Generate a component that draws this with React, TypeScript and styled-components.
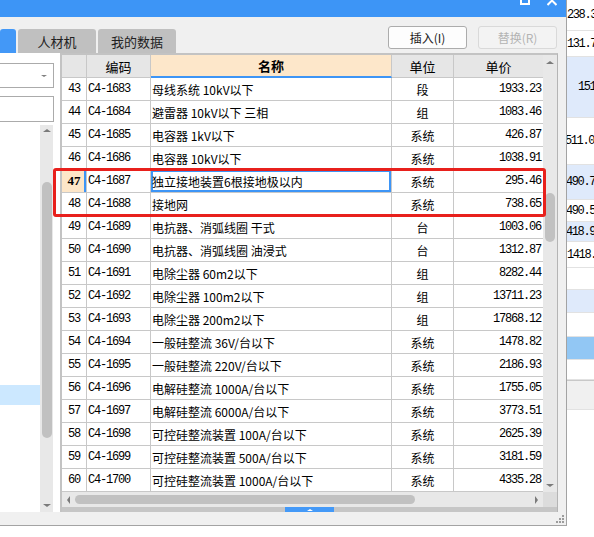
import React from "react";
import styled, { createGlobalStyle, css } from "styled-components";

const GlobalStyle = createGlobalStyle`
  html, body {
    margin: 0;
    padding: 0;
    background: #ffffff;
  }
  body {
    width: 594px;
    height: 537px;
    overflow: hidden;
    font-family: "Noto Sans CJK SC", "Noto Sans", sans-serif;
  }
`;

const mono = css`
  font-family: "Liberation Mono", "DejaVu Sans Mono", monospace;
  font-size: 12px;
  letter-spacing: -1.2px;
`;

const Page = styled.div`
  display: flex;
  align-items: flex-start;
  width: 594px;
  height: 537px;
  overflow: hidden;
  background: #fff;
`;

const Dialog = styled.div`
  position: relative;
  flex: none;
  display: flex;
  flex-direction: column;
  width: 567px;
  height: 526px;
  box-sizing: border-box;
  border-right: 1px solid #a3a3a3;
  border-bottom: 1px solid #a3a3a3;
  background: #f0f0f0;
`;

const TitleBar = styled.div`
  display: flex;
  justify-content: flex-end;
  align-items: flex-start;
  gap: 17px;
  height: 17px;
  padding-right: 9px;
  background: #3d95f6;
`;

const Toolbar = styled.div`
  display: flex;
  justify-content: space-between;
  height: 36px;
`;

const TabRow = styled.div`
  display: flex;
  align-self: flex-end;
  gap: 2px;
`;

const Tab = styled.div<{ $active?: boolean; $w: number }>`
  display: flex;
  align-items: center;
  justify-content: center;
  width: ${(p) => p.$w}px;
  height: 24px;
  border-radius: 3px 3px 0 0;
  background: ${(p) => (p.$active ? "#4398f7" : "#c0c0c0")};
  color: #222;
  font-size: 13px;
`;

const ButtonRow = styled.div`
  display: flex;
  align-self: flex-start;
  gap: 11px;
  padding: 9px 9px 0 0;
`;

const Button = styled.div<{ $disabled?: boolean }>`
  display: flex;
  align-items: center;
  justify-content: center;
  width: 79px;
  height: 23px;
  box-sizing: border-box;
  border: 1px solid ${(p) => (p.$disabled ? "#d9d9d9" : "#acacac")};
  border-radius: 3px;
  background: ${(p) => (p.$disabled ? "#f3f3f3" : "#fdfdfd")};
  color: ${(p) => (p.$disabled ? "#b3b3b3" : "#1a1a1a")};
  font-size: 12px;
`;

const Main = styled.div`
  display: flex;
  height: 459px;
`;

const LeftPanel = styled.div`
  display: flex;
  flex-direction: column;
  width: 60px;
  padding-top: 10px;
  box-sizing: border-box;
  background: #fff;
`;

const SelectBox = styled.div`
  display: flex;
  align-items: center;
  justify-content: flex-end;
  width: 54px;
  height: 25px;
  box-sizing: border-box;
  border: 1px solid #ababab;
  border-left: none;
  padding-right: 6px;
`;

const InputBox = styled.div`
  width: 54px;
  height: 26px;
  margin-top: 8px;
  box-sizing: border-box;
  border: 1px solid #ababab;
  border-left: none;
`;

const Triangle = styled.div<{ $dir: "up" | "down" | "left" | "right"; $size?: number; $color?: string }>`
  width: 0;
  height: 0;
  ${(p) => {
    const s = p.$size ?? 4;
    const c = p.$color ?? "#7a7a7a";
    if (p.$dir === "up")
      return `border-left:${s}px solid transparent;border-right:${s}px solid transparent;border-bottom:${s - 1}px solid ${c};`;
    if (p.$dir === "down")
      return `border-left:${s}px solid transparent;border-right:${s}px solid transparent;border-top:${s - 1}px solid ${c};`;
    if (p.$dir === "left")
      return `border-top:${s}px solid transparent;border-bottom:${s}px solid transparent;border-right:${s - 1}px solid ${c};`;
    return `border-top:${s}px solid transparent;border-bottom:${s}px solid transparent;border-left:${s - 1}px solid ${c};`;
  }}
`;

const ListArea = styled.div`
  display: flex;
  flex: 1;
  width: 53px;
  margin-top: 3px;
`;

const ListBody = styled.div`
  flex: 1;
  display: flex;
  flex-direction: column;
`;

const ListRow = styled.div<{ $selected?: boolean }>`
  height: 20px;
  flex: none;
  background: ${(p) => (p.$selected ? "#cce8ff" : "transparent")};
`;

const VScroll = styled.div<{ $w: number }>`
  display: flex;
  flex-direction: column;
  align-items: center;
  width: ${(p) => p.$w}px;
  flex: none;
  background: #e8e8e8;
`;

const ArrowBox = styled.div<{ $h: number }>`
  display: flex;
  align-items: center;
  justify-content: center;
  height: ${(p) => p.$h}px;
  flex: none;
`;

const VThumb = styled.div<{ $top: number; $h: number }>`
  width: 10px;
  height: ${(p) => p.$h}px;
  margin-top: ${(p) => p.$top}px;
  border-radius: 5px;
  background: #c1c1c1;
`;

const Spacer = styled.div`
  flex: 1;
`;

const GridPane = styled.div`
  display: flex;
  flex-direction: column;
  width: 498px;
  box-sizing: border-box;
  border-left: 2px solid #c3c3c3;
  border-top: 2px solid #c3c3c3;
  border-right: 1px solid #b4b4b4;
`;

const GridTop = styled.div`
  display: flex;
  height: 437px;
`;

const Table = styled.div`
  display: flex;
  flex-direction: column;
  width: 481px;
  background: #fff;
`;

const Row = styled.div`
  display: grid;
  grid-template-columns: 25px 64px 241px 62px 89px;
  height: 23px;
  flex: none;
`;

type Align = "left" | "center" | "right";

const Cell = styled.div<{ $align?: Align; $last?: boolean }>`
  display: flex;
  align-items: center;
  justify-content: ${(p) =>
    p.$align === "center" ? "center" : p.$align === "right" ? "flex-end" : "flex-start"};
  box-sizing: border-box;
  padding: 0 2px;
  border-bottom: 1px solid #c8c8c8;
  border-right: ${(p) => (p.$last ? "none" : "1px solid #c8c8c8")};
  white-space: nowrap;
  overflow: hidden;
  color: #000;
  font-size: 12px;
`;

const HeadCell = styled(Cell)<{ $sorted?: boolean }>`
  background: ${(p) => (p.$sorted ? "#fde7ca" : "#e6e6e6")};
  font-size: 13px;
  font-weight: ${(p) => (p.$sorted ? 700 : 400)};
  border-bottom: ${(p) => (p.$sorted ? "2px solid #3d95f6" : "1px solid #c8c8c8")};
`;

const NumCell = styled(Cell)<{ $current?: boolean }>`
  ${mono};
  padding: 0;
  ${(p) =>
    p.$current &&
    css`
      background: #fde6c8;
      box-shadow: inset -2px 0 0 #3d95f6;
      font-family: "Liberation Serif", serif;
      font-weight: 700;
      font-size: 13px;
      letter-spacing: 0;
    `}
`;

const CodeCell = styled(Cell)`
  ${mono};
  padding-left: 1px;
`;

const NameCell = styled(Cell)<{ $editing?: boolean }>`
  padding-left: 1px;
  ${(p) =>
    p.$editing &&
    css`
      box-shadow: inset 0 0 0 2px #3d95f6;
    `}
`;

const PriceCell = styled(Cell)`
  ${mono};
`;

const HScrollRow = styled.div`
  display: flex;
  height: 15px;
`;

const HScroll = styled.div`
  display: flex;
  align-items: center;
  width: 481px;
  background: #e8e8e8;
`;

const HArrow = styled.div`
  display: flex;
  align-items: center;
  justify-content: center;
  width: 13px;
  height: 15px;
  flex: none;
`;

const HThumb = styled.div<{ $w: number }>`
  width: ${(p) => p.$w}px;
  height: 9px;
  border-radius: 5px;
  background: #c1c1c1;
`;

const Corner = styled.div`
  width: 14px;
  background: #dcdcdc;
`;

const Splitter = styled.div`
  display: flex;
  justify-content: center;
  height: 5px;
  background: #c6c6c6;
`;

const SplitHandle = styled.div`
  display: flex;
  align-items: center;
  justify-content: center;
  width: 49px;
  background: #4499f7;
`;

const StatusBar = styled.div`
  display: flex;
  justify-content: flex-end;
  align-items: center;
  height: 13px;
  padding-right: 2px;
`;

const Highlight = styled.div`
  position: absolute;
  left: 53px;
  top: 168px;
  width: 493px;
  height: 49px;
  box-sizing: border-box;
  border: 3px solid #e8201c;
  border-radius: 3px;
  pointer-events: none;
`;

const Strip = styled.div`
  display: flex;
  flex-direction: column;
  flex: 1;
  height: 537px;
  overflow: hidden;
`;

const StripRow = styled.div<{ $h: number; $bg: string; $indent: number; $line?: boolean }>`
  display: flex;
  align-items: center;
  height: ${(p) => p.$h}px;
  flex: none;
  box-sizing: border-box;
  background: ${(p) => p.$bg};
  border-top: ${(p) => (p.$line ? "1px solid #c8c8c8" : "none")};
  border-bottom: 1px solid #e2e2e2;
  white-space: nowrap;
  ${mono};
  letter-spacing: -1.4px;
  color: #000;
  span {
    margin-left: ${(p) => p.$indent}px;
  }
`;

type Item = { no: number; code: string; name: string; unit: string; price: string };

const items: Item[] = [
  { no: 43, code: "C4-1683", name: "母线系统 10kV以下", unit: "段", price: "1933.23" },
  { no: 44, code: "C4-1684", name: "避雷器 10kV以下 三相", unit: "组", price: "1083.46" },
  { no: 45, code: "C4-1685", name: "电容器 1kV以下", unit: "系统", price: "426.87" },
  { no: 46, code: "C4-1686", name: "电容器 10kV以下", unit: "系统", price: "1038.91" },
  { no: 47, code: "C4-1687", name: "独立接地装置6根接地极以内", unit: "系统", price: "295.46" },
  { no: 48, code: "C4-1688", name: "接地网", unit: "系统", price: "738.65" },
  { no: 49, code: "C4-1689", name: "电抗器、消弧线圈 干式", unit: "台", price: "1003.06" },
  { no: 50, code: "C4-1690", name: "电抗器、消弧线圈 油浸式", unit: "台", price: "1312.87" },
  { no: 51, code: "C4-1691", name: "电除尘器 60m2以下", unit: "组", price: "8282.44" },
  { no: 52, code: "C4-1692", name: "电除尘器 100m2以下", unit: "组", price: "13711.23" },
  { no: 53, code: "C4-1693", name: "电除尘器 200m2以下", unit: "组", price: "17868.12" },
  { no: 54, code: "C4-1694", name: "一般硅整流 36V/台以下", unit: "系统", price: "1478.82" },
  { no: 55, code: "C4-1695", name: "一般硅整流 220V/台以下", unit: "系统", price: "2186.93" },
  { no: 56, code: "C4-1696", name: "电解硅整流 1000A/台以下", unit: "系统", price: "1755.05" },
  { no: 57, code: "C4-1697", name: "电解硅整流 6000A/台以下", unit: "系统", price: "3773.51" },
  { no: 58, code: "C4-1698", name: "可控硅整流装置 100A/台以下", unit: "系统", price: "2625.39" },
  { no: 59, code: "C4-1699", name: "可控硅整流装置 500A/台以下", unit: "系统", price: "3181.59" },
  { no: 60, code: "C4-1700", name: "可控硅整流装置 1000A/台以下", unit: "系统", price: "4335.28" },
];

const stripRows = [
  { h: 31, bg: "#ffffff", text: "238.3", indent: 0 },
  { h: 26, bg: "#ffffff", text: "131.7", indent: 0 },
  { h: 61, bg: "#dfeafb", text: "151", indent: 11 },
  { h: 47, bg: "#ffffff", text: "511.0", indent: -2 },
  { h: 35, bg: "#dfeafb", text: "490.7", indent: -1 },
  { h: 22, bg: "#ffffff", text: "490.5", indent: -1 },
  { h: 20, bg: "#dfeafb", text: "418.9", indent: -1 },
  { h: 26, bg: "#ffffff", text: "1418.", indent: 0 },
  { h: 22, bg: "#ffffff", text: "", indent: 0 },
  { h: 23, bg: "#dfeafb", text: "", indent: 0 },
  { h: 24, bg: "#ffffff", text: "", indent: 0 },
  { h: 23, bg: "#92c7f4", text: "", indent: 0 },
  { h: 20, bg: "#ffffff", text: "", indent: 0 },
  { h: 30, bg: "#f0f0f0", text: "", indent: 0, line: true },
];

const MaxIcon = () => (
  <svg width="10" height="5" viewBox="0 0 10 5">
    <rect x="1" y="-6" width="8" height="10" fill="none" stroke="#fff" strokeWidth="2" />
  </svg>
);

const CloseIcon = () => (
  <svg width="10" height="6" viewBox="0 0 10 6">
    <path d="M0.5 -4 L9.5 5 M9.5 -4 L0.5 5" stroke="#fff" strokeWidth="2" />
  </svg>
);

const Grip = () => (
  <svg width="8" height="8" viewBox="0 0 8 8">
    {[
      [6, 0],
      [3, 3],
      [6, 3],
      [0, 6],
      [3, 6],
      [6, 6],
    ].map(([x, y]) => (
      <rect key={`${x}-${y}`} x={x} y={y} width="2" height="2" fill="#9c9c9c" />
    ))}
  </svg>
);

export default function App() {
  return (
    <Page>
      <GlobalStyle />
      <Dialog>
        <TitleBar>
          <MaxIcon />
          <CloseIcon />
        </TitleBar>
        <Toolbar>
          <TabRow>
            <Tab $active $w={16} />
            <Tab $w={78}>人材机</Tab>
            <Tab $w={78}>我的数据</Tab>
          </TabRow>
          <ButtonRow>
            <Button>插入(I)</Button>
            <Button $disabled>替换(R)</Button>
          </ButtonRow>
        </Toolbar>
        <Main>
          <LeftPanel>
            <SelectBox>
              <Triangle $dir="down" $size={3} $color="#808080" />
            </SelectBox>
            <InputBox />
            <ListArea>
              <ListBody>
                {Array.from({ length: 19 }, (_, i) => (
                  <ListRow key={i} $selected={i === 13} />
                ))}
              </ListBody>
              <VScroll $w={13}>
                <ArrowBox $h={10}>
                  <Triangle $dir="up" $size={4} />
                </ArrowBox>
                <VThumb $top={47} $h={256} />
                <Spacer />
                <ArrowBox $h={14}>
                  <Triangle $dir="down" $size={4} />
                </ArrowBox>
              </VScroll>
            </ListArea>
          </LeftPanel>
          <GridPane>
            <GridTop>
              <Table>
                <Row>
                  <HeadCell />
                  <HeadCell $align="center">编码</HeadCell>
                  <HeadCell $align="center" $sorted>
                    名称
                  </HeadCell>
                  <HeadCell $align="center">单位</HeadCell>
                  <HeadCell $align="center" $last>
                    单价
                  </HeadCell>
                </Row>
                {items.map((it) => {
                  const current = it.no === 47;
                  return (
                    <Row key={it.no}>
                      <NumCell $align="center" $current={current}>
                        {it.no}
                      </NumCell>
                      <CodeCell>{it.code}</CodeCell>
                      <NameCell $editing={current}>{it.name}</NameCell>
                      <Cell $align="center">{it.unit}</Cell>
                      <PriceCell $align="right" $last>
                        {it.price}
                      </PriceCell>
                    </Row>
                  );
                })}
              </Table>
              <VScroll $w={14}>
                <ArrowBox $h={14}>
                  <Triangle $dir="up" $size={4} />
                </ArrowBox>
                <VThumb $top={124} $h={49} />
                <Spacer />
                <ArrowBox $h={14}>
                  <Triangle $dir="down" $size={4} />
                </ArrowBox>
              </VScroll>
            </GridTop>
            <HScrollRow>
              <HScroll>
                <HArrow>
                  <Triangle $dir="left" $size={4} />
                </HArrow>
                <HThumb $w={340} />
                <Spacer />
                <HArrow>
                  <Triangle $dir="right" $size={4} />
                </HArrow>
              </HScroll>
              <Corner />
            </HScrollRow>
            <Splitter>
              <SplitHandle>
                <Triangle $dir="up" $size={3} $color="#ffffff" />
              </SplitHandle>
            </Splitter>
          </GridPane>
        </Main>
        <StatusBar>
          <Grip />
        </StatusBar>
        <Highlight />
      </Dialog>
      <Strip>
        {stripRows.map((r, i) => (
          <StripRow key={i} $h={r.h} $bg={r.bg} $indent={r.indent} $line={r.line}>
            <span>{r.text}</span>
          </StripRow>
        ))}
      </Strip>
    </Page>
  );
}
